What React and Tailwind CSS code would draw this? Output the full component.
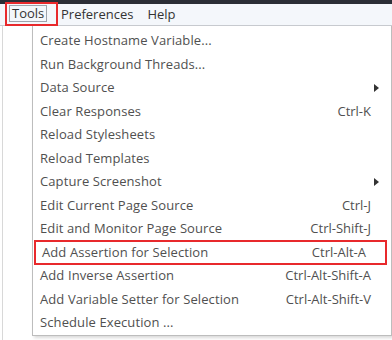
import React from 'react';

// Tools menu opened from a desktop menu bar, one item highlighted by a red box.

const items = [
  { label: 'Create Hostname Variable...' },
  { label: 'Run Background Threads...' },
  { label: 'Data Source', sub: true },
  { label: 'Clear Responses', key: 'Ctrl-K' },
  { label: 'Reload Stylesheets' },
  { label: 'Reload Templates' },
  { label: 'Capture Screenshot', sub: true },
  { label: 'Edit Current Page Source', key: 'Ctrl-J' },
  { label: 'Edit and Monitor Page Source', key: 'Ctrl-Shift-J' },
  { label: 'Add Assertion for Selection', key: 'Ctrl-Alt-A', marked: true },
  { label: 'Add Inverse Assertion', key: 'Ctrl-Alt-Shift-A' },
  { label: 'Add Variable Setter for Selection', key: 'Ctrl-Alt-Shift-V' },
  { label: 'Schedule Execution ...' },
];

function Arrow() {
  return (
    <svg width="5" height="8" viewBox="0 0 5 8" className="absolute right-[12px] top-1/2 -translate-y-1/2">
      <path d="M0 0 L5 4 L0 8 Z" fill="#333" />
    </svg>
  );
}

export default function App() {
  return (
    <div
      className="w-[392px] h-[340px] overflow-hidden bg-white text-[13px] text-[#505050] flex flex-col"
      style={{ fontFamily: '"Open Sans", "Noto Sans", sans-serif' }}
    >
      <div className="h-[4px] bg-[#2b2e36] shrink-0" />
      <div className="h-[22px] shrink-0 bg-[#f4f7fb] border-b border-[#c9ccd1] flex items-center">
        <div className="relative ml-[5px] w-[53px] h-[24px] -mt-[2px] border-2 border-[#e8292c] flex items-center">
          <span className="ml-[2px] px-[2px] h-[17px] leading-[15px] border border-[#9ea3ab] text-[#333]">Tools</span>
        </div>
        <span className="ml-[3px] text-[#333]">Preferences</span>
        <span className="ml-[14px] text-[#333]">Help</span>
      </div>
      <div className="flex flex-1 min-h-0">
        <div className="w-[30px] shrink-0 border-l border-[#d8d8d8] ml-[2px]" />
        <div className="flex-1 h-[310px] border border-t-0 border-[#bdbdbd] bg-white pt-[3px] shadow-[2px_2px_3px_rgba(0,0,0,0.15)]">
          {items.map((it) => (
            <div
              key={it.label}
              className={
                'relative h-[23.5px] flex items-center pl-[7px] pr-[20px] ' +
                (it.marked ? 'outline-2 outline-[#e8292c] -outline-offset-1 ml-[2px] mr-[5px] pl-[5px] pr-[15px]' : '')
              }
            >
              <span className="flex-1 whitespace-nowrap tracking-[0.1px]">{it.label}</span>
              {it.key && <span className="whitespace-nowrap">{it.key}</span>}
              {it.sub && <Arrow />}
            </div>
          ))}
        </div>
      </div>
    </div>
  );
}
